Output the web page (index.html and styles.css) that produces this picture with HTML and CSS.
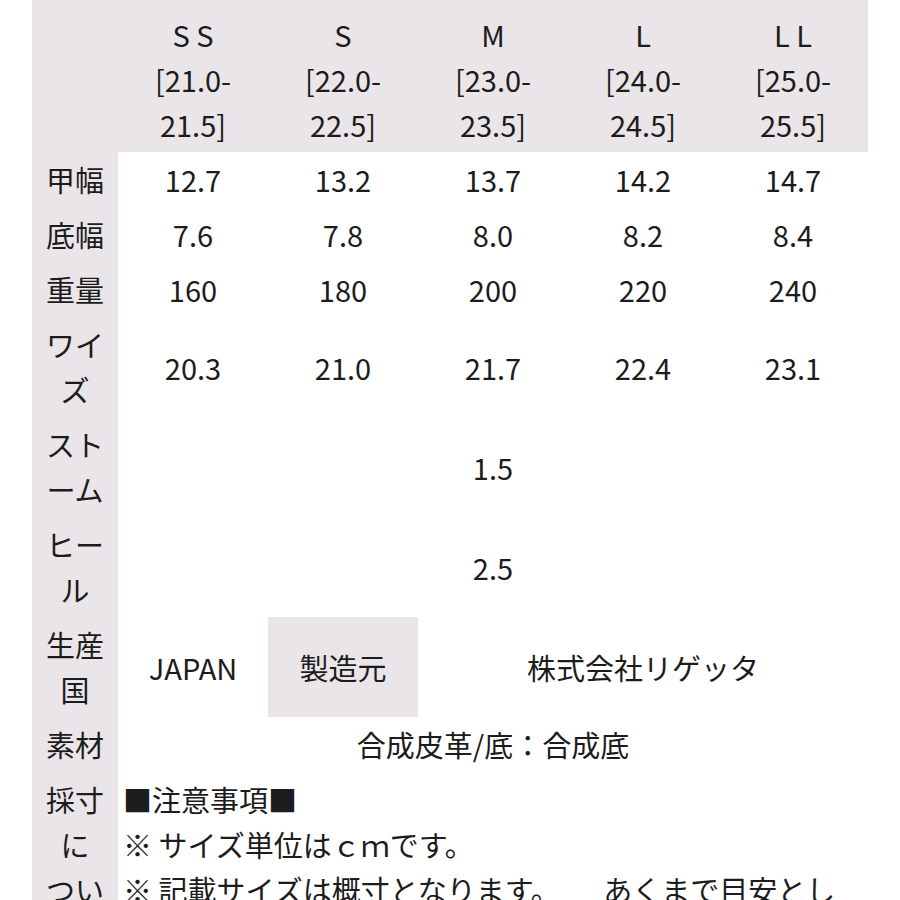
FILE: index.html
```html
<!DOCTYPE html>
<html lang="ja">
<head>
<meta charset="utf-8">
<title>サイズ表</title>
<link rel="stylesheet" href="styles.css">
</head>
<body>
<table class="size-table">
  <colgroup>
    <col class="col-label">
    <col class="col-size">
    <col class="col-size">
    <col class="col-size">
    <col class="col-size">
    <col class="col-size">
  </colgroup>
  <thead>
    <tr class="head-row">
      <th class="label"></th>
      <th>S S<br>[21.0-<br>21.5]</th>
      <th>S<br>[22.0-<br>22.5]</th>
      <th>M<br>[23.0-<br>23.5]</th>
      <th>L<br>[24.0-<br>24.5]</th>
      <th>L L<br>[25.0-<br>25.5]</th>
    </tr>
  </thead>
  <tbody>
    <tr>
      <th class="label">甲幅</th>
      <td>12.7</td><td>13.2</td><td>13.7</td><td>14.2</td><td>14.7</td>
    </tr>
    <tr>
      <th class="label">底幅</th>
      <td>7.6</td><td>7.8</td><td>8.0</td><td>8.2</td><td>8.4</td>
    </tr>
    <tr>
      <th class="label">重量</th>
      <td>160</td><td>180</td><td>200</td><td>220</td><td>240</td>
    </tr>
    <tr>
      <th class="label">ワイ<br>ズ</th>
      <td>20.3</td><td>21.0</td><td>21.7</td><td>22.4</td><td>23.1</td>
    </tr>
    <tr>
      <th class="label">スト<br>ーム</th>
      <td colspan="5">1.5</td>
    </tr>
    <tr>
      <th class="label">ヒー<br>ル</th>
      <td colspan="5">2.5</td>
    </tr>
    <tr>
      <th class="label">生産<br>国</th>
      <td>JAPAN</td>
      <td class="maker">製造元</td>
      <td colspan="3">株式会社リゲッタ</td>
    </tr>
    <tr>
      <th class="label">素材</th>
      <td colspan="5">合成皮革/底：合成底</td>
    </tr>
    <tr class="notes-row">
      <th class="label">採寸<br>に<br>つい<br>て</th>
      <td colspan="5" class="notes">■注意事項■<br>※ サイズ単位はｃｍです。<br>※ 記載サイズは概寸となります。　　あくまで目安としてご参考ください。<br>※ 商品により多少の誤差が生じる場合がございます。</td>
    </tr>
  </tbody>
</table>
</body>
</html>
```

FILE: styles.css
```css
html, body {
  margin: 0;
  padding: 0;
  background: #ffffff;
}

body {
  font-family: "Noto Sans CJK JP", "Noto Sans", sans-serif;
  font-size: 29px;
  line-height: 45px;
  color: #1c1c1c;
}

.size-table {
  margin-left: 32px;
  width: 836px;
  table-layout: fixed;
  border-collapse: collapse;
  border-spacing: 0;
}

.col-label {
  width: 86px;
}

.col-size {
  width: 150px;
}

.size-table th,
.size-table td {
  padding: 5px 0;
  text-align: center;
  vertical-align: middle;
  font-weight: normal;
}

.head-row th {
  background: #e9e5e8;
  padding: 12px 0 5px;
}

.label {
  background: #e9e5e8;
}

.maker {
  background: #e9e5e8;
}

.notes-row th,
.notes-row td {
  vertical-align: top;
}

.size-table td.notes {
  text-align: left;
  padding: 5px 5px;
}
```
